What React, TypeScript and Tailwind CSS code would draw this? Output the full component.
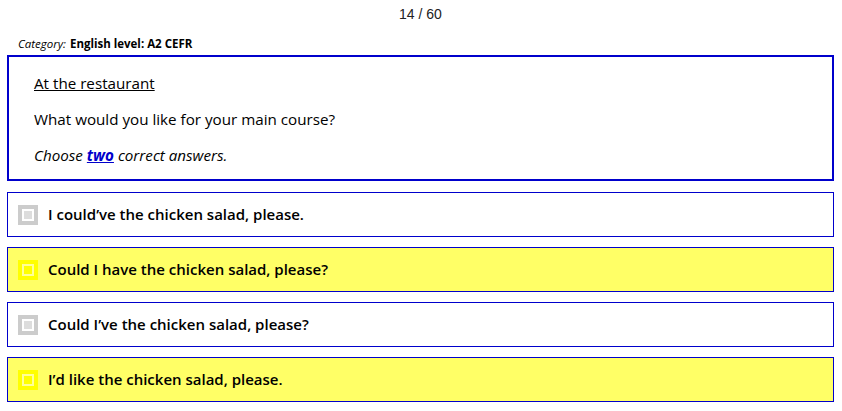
const options = [
  { text: "I could\u2019ve the chicken salad, please.", selected: false },
  { text: "Could I have the chicken salad, please?", selected: true },
  { text: "Could I\u2019ve the chicken salad, please?", selected: false },
  { text: "I\u2019d like the chicken salad, please.", selected: true },
];

function CheckBox({ selected }: { selected: boolean }) {
  return (
    <div
      className={
        selected
          ? "w-5 h-5 border-4 border-[#ffff00] bg-[#ffff99] flex items-center justify-center shrink-0"
          : "w-5 h-5 border-4 border-[#cccccc] bg-white flex items-center justify-center shrink-0"
      }
    >
      <div className={selected ? "w-2 h-2 bg-[#ffff00]" : "w-2 h-2 bg-[#dddddd]"} />
    </div>
  );
}

export default function App() {
  return (
    <div className="w-[842px] h-[411px] bg-white text-black font-['Open_Sans',sans-serif] pl-[7px] pr-[8px]">
      <div className="h-[29px] flex items-center justify-center font-['Liberation_Sans',sans-serif] text-[14px] text-[#222]">
        14 / 60
      </div>
      <div className="h-[26px] pl-[11px] flex items-center pt-[4px] text-[11.5px]">
        <span className="italic">Category:</span>
        <span className="font-bold ml-1">English level: A2 CEFR</span>
      </div>
      <div className="border-2 border-[#0000cc] h-[126px] pl-[25px] pt-[15px] text-[15.2px] flex flex-col gap-[14px]">
        <div className="underline leading-[22px]">At the restaurant</div>
        <div className="leading-[22px]">What would you like for your main course?</div>
        <div className="italic leading-[22px]">
          Choose{" "}
          <span className="font-bold text-[#0000cc] underline">two</span>{" "}
          correct answers.
        </div>
      </div>
      <div className="flex flex-col gap-[10px] mt-[11px]">
        {options.map((o) => (
          <div
            key={o.text}
            className={
              o.selected
                ? "h-[45px] border border-[#0000cc] bg-[#ffff66] flex items-center gap-[10px] pl-[10px]"
                : "h-[45px] border border-[#0000cc] bg-white flex items-center gap-[10px] pl-[10px]"
            }
          >
            <CheckBox selected={o.selected} />
            <span className="text-[15px] font-semibold">{o.text}</span>
          </div>
        ))}
      </div>
    </div>
  );
}
